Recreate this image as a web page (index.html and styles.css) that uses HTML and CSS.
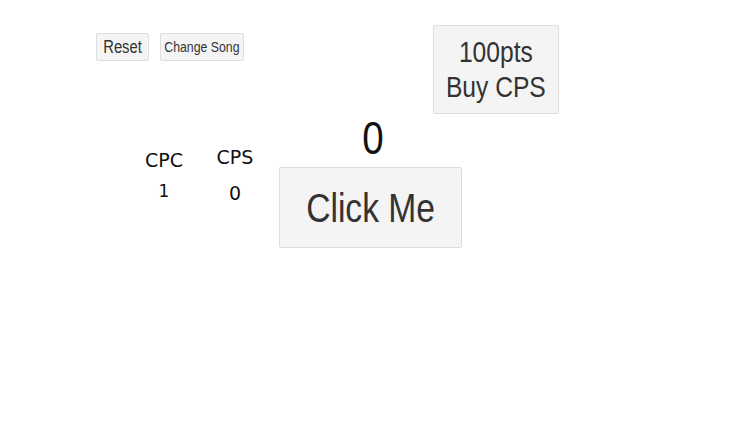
FILE: index.html
```html
<!DOCTYPE html>
<html>
<head>
<meta charset="utf-8">
<title>Clicker</title>
<link rel="stylesheet" href="styles.css">
</head>
<body>
<div class="page">
  <div class="top">
    <div class="controls">
      <button class="btn btn-reset"><span class="narrow">Reset</span></button>
      <button class="btn btn-song"><span class="narrow">Change Song</span></button>
    </div>
    <button class="btn btn-buy"><span class="narrow">100pts<br>Buy CPS</span></button>
  </div>
  <div class="main">
    <div class="stats">
      <div class="stat stat-cpc">
        <div class="stat-label">CPC</div>
        <div class="stat-value stat-value-cpc">1</div>
      </div>
      <div class="stat stat-cps">
        <div class="stat-label">CPS</div>
        <div class="stat-value">0</div>
      </div>
    </div>
    <div class="clicker">
      <div class="counter"><span class="narrow">0</span></div>
      <button class="btn btn-click"><span class="narrow">Click Me</span></button>
    </div>
  </div>
</div>
</body>
</html>
```
FILE: styles.css
```css
html, body {
  margin: 0;
  padding: 0;
  background: #ffffff;
}

.page {
  padding-top: 25px;
  font-family: "Liberation Sans", Arial, sans-serif;
  color: #333333;
}

.narrow {
  display: inline-block;
  transform: scaleX(0.82);
  white-space: nowrap;
}

.top {
  display: flex;
  align-items: flex-start;
}

.controls {
  display: flex;
  gap: 11px;
  margin-top: 8px;
  margin-left: 96px;
}

.btn {
  font-family: "Liberation Sans", Arial, sans-serif;
  background: #f4f4f4;
  border: 1px solid #dedede;
  border-radius: 2px;
  color: #333333;
  margin: 0;
  padding: 0;
  line-height: 1.15;
  cursor: pointer;
  display: flex;
  align-items: center;
  justify-content: center;
  text-align: center;
}

.btn-reset {
  font-size: 18px;
  width: 53px;
  height: 28px;
}

.btn-song {
  font-size: 15px;
  width: 84px;
  height: 28px;
}

.btn-buy {
  font-size: 30px;
  width: 126px;
  height: 89px;
  margin-left: 189px;
}

.main {
  display: flex;
  align-items: flex-start;
}

.stats {
  display: flex;
  gap: 11px;
  margin-left: 134px;
  font-family: "DejaVu Sans", sans-serif;
  color: #111111;
}

.stat {
  width: 60px;
  text-align: center;
  padding-top: 32px;
}

.stat-cpc {
  padding-top: 35px;
}

.stat-label {
  font-size: 19px;
  line-height: 22px;
}

.stat-value {
  font-size: 19px;
  line-height: 22px;
  margin-top: 14px;
}

.stat-value-cpc {
  font-size: 17px;
  margin-top: 9px;
}

.clicker {
  margin-left: 14px;
  width: 183px;
  display: flex;
  flex-direction: column;
  align-items: center;
}

.counter {
  font-size: 47px;
  line-height: 48px;
  color: #111111;
  padding-left: 6px;
}

.btn-click {
  margin-top: 5px;
  font-size: 41px;
  width: 183px;
  height: 81px;
  padding-top: 2px;
}
```
